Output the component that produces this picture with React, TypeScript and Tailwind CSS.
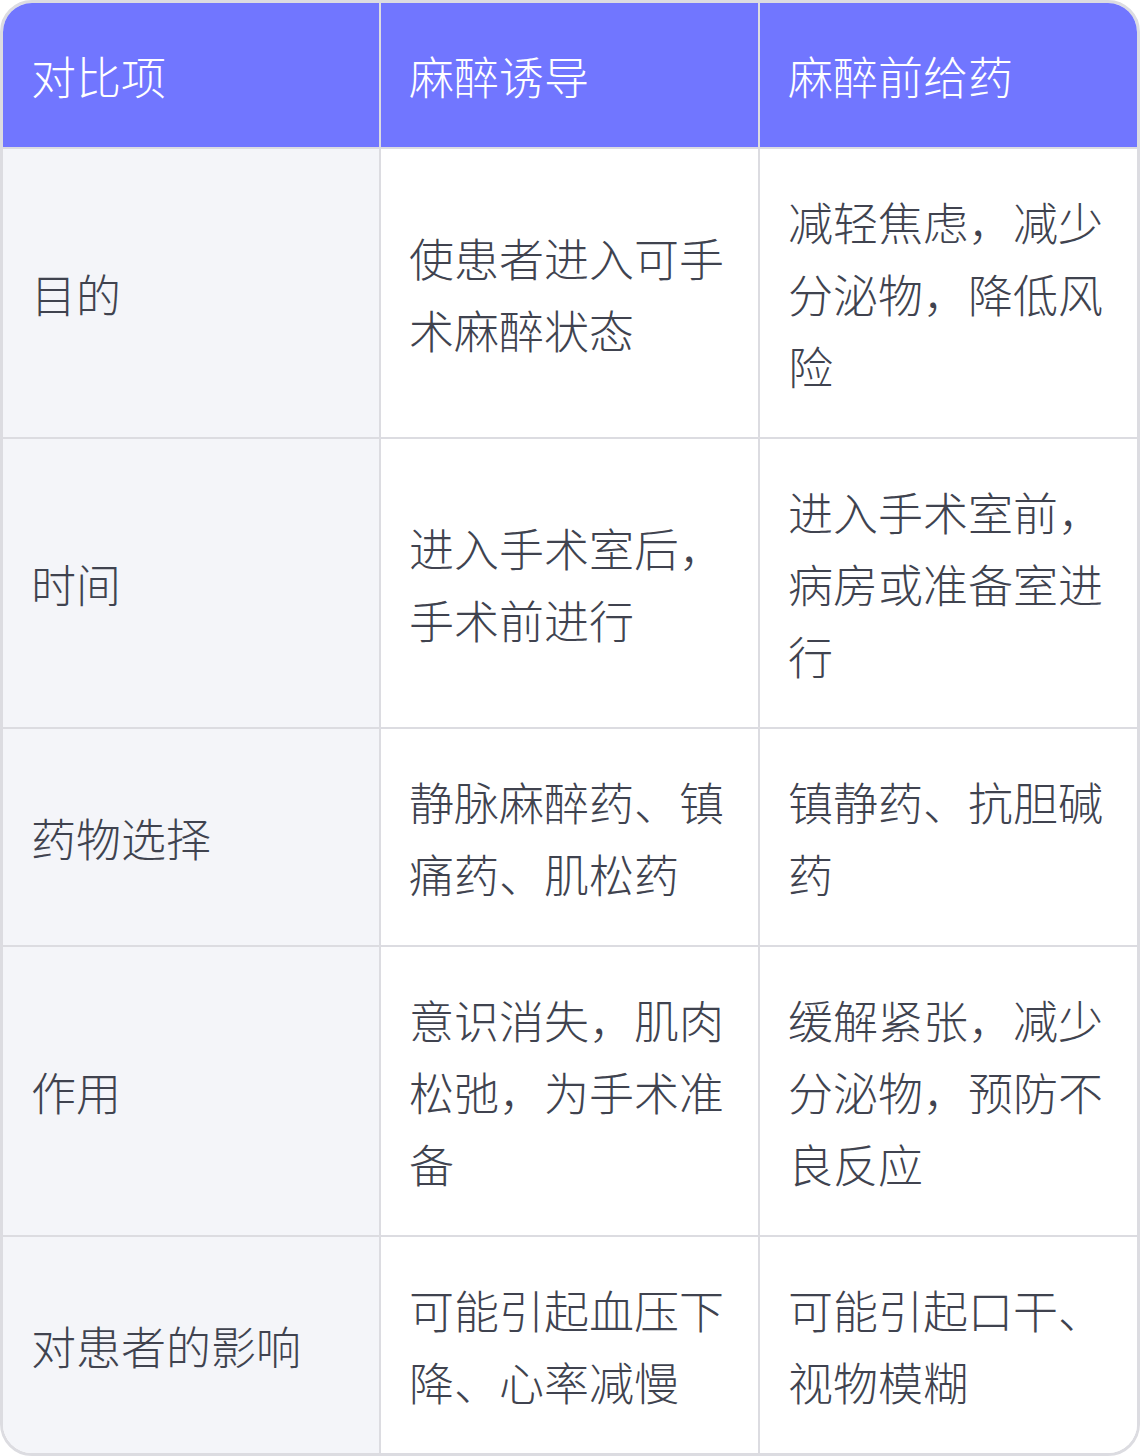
const headers = ["对比项", "麻醉诱导", "麻醉前给药"];

const rows = [
  ["目的", "使患者进入可手术麻醉状态", "减轻焦虑，减少分泌物，降低风险"],
  ["时间", "进入手术室后，手术前进行", "进入手术室前，病房或准备室进行"],
  ["药物选择", "静脉麻醉药、镇痛药、肌松药", "镇静药、抗胆碱药"],
  ["作用", "意识消失，肌肉松弛，为手术准备", "缓解紧张，减少分泌物，预防不良反应"],
  ["对患者的影响", "可能引起血压下降、心率减慢", "可能引起口干、视物模糊"],
];

export default function App() {
  return (
    <div
      className="w-[1140px] bg-white font-light"
      style={{ fontFamily: "'Noto Sans CJK SC Light', 'Noto Sans CJK SC DemiLight', 'Noto Sans CJK SC', 'Noto Sans', sans-serif" }}
    >
      <div className="w-[1140px] overflow-hidden rounded-[32px] border-[3px] border-[#dcdce1]">
        <table className="w-full table-fixed border-separate border-spacing-0 text-[45px] leading-[72px]">
          <colgroup>
            <col className="w-[378px]" />
            <col className="w-[379px]" />
            <col className="w-[377px]" />
          </colgroup>
          <thead>
            <tr className="bg-[#7176ff] text-white">
              {headers.map((h, i) => (
                <th
                  key={h}
                  className={
                    "px-[28px] pt-[37px] pb-[35px] text-left font-light border-b-2 border-[#dcdce1] " +
                    (i < 2 ? "border-r-2" : "")
                  }
                >
                  {h}
                </th>
              ))}
            </tr>
          </thead>
          <tbody className="text-[#40434f]">
            {rows.map((r, ri) => (
              <tr key={ri}>
                {r.map((c, ci) => (
                  <td
                    key={ci}
                    className={
                      "px-[28px] pt-[37px] pb-[35px] align-middle border-[#dcdce1] " +
                      (ci === 0 ? "bg-[#f4f5f9] " : "bg-white ") +
                      (ci < 2 ? "border-r-2 " : "") +
                      (ri < rows.length - 1 ? "border-b-2" : "")
                    }
                  >
                    {c}
                  </td>
                ))}
              </tr>
            ))}
          </tbody>
        </table>
      </div>
    </div>
  );
}
